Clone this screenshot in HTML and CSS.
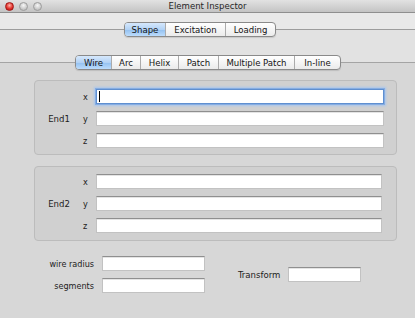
FILE: index.html
```html
<!DOCTYPE html>
<html lang="en">

<head>
  <meta charset="UTF-8">
  <meta name="viewport" content="width=device-width, initial-scale=1.0">
  <title>Element Inspector</title>
  <link rel="stylesheet" href="styles.css">
</head>

<body>
  <div class="window">
    <div class="titlebar">
      <div class="lights">
        <span class="light light--close"></span>
        <span class="light"></span>
        <span class="light"></span>
      </div>
      <div class="titlebar__title">Element Inspector</div>
      <div></div>
    </div>
    <div class="strip"></div>

    <div class="tabview tabview--outer">
      <div class="segmented segmented--outer">
        <span class="segmented__item segmented__item--active tab-shape">Shape</span>
        <span class="segmented__item tab-excitation">Excitation</span>
        <span class="segmented__item tab-loading">Loading</span>
      </div>

      <div class="tabview tabview--inner">
        <div class="segmented segmented--inner">
          <span class="segmented__item segmented__item--active tab-wire">Wire</span>
          <span class="segmented__item tab-arc">Arc</span>
          <span class="segmented__item tab-helix">Helix</span>
          <span class="segmented__item tab-patch">Patch</span>
          <span class="segmented__item tab-multiple">Multiple Patch</span>
          <span class="segmented__item tab-inline">In-line</span>
        </div>

        <div class="group group--first">
          <div class="group__name">End1</div>
          <div class="group__axis">x</div>
          <div class="field field--focus"><span class="caret"></span></div>
          <div class="group__axis">y</div>
          <div class="field"></div>
          <div class="group__axis">z</div>
          <div class="field"></div>
        </div>

        <div class="group">
          <div class="group__name">End2</div>
          <div class="group__axis">x</div>
          <div class="field"></div>
          <div class="group__axis">y</div>
          <div class="field"></div>
          <div class="group__axis">z</div>
          <div class="field"></div>
        </div>

        <div class="params">
          <div class="params__list">
            <div class="params__label">wire radius</div>
            <div class="field"></div>
            <div class="params__label">segments</div>
            <div class="field"></div>
          </div>
          <div class="params__transform">
            <div class="params__label">Transform</div>
            <div class="field field--short"></div>
          </div>
        </div>
      </div>
    </div>
  </div>
</body>

</html>
```

FILE: styles.css
```css
body {
  margin: 0;
  font-family: "DejaVu Sans Condensed", "Liberation Sans", Arial, sans-serif;
  font-size: 9.5px;
  color: #1c1c1c;
  background: #d7d7d7;
}

.window {
  width: 415px;
  height: 318px;
  overflow: hidden;
  display: flex;
  flex-direction: column;
  background: #d7d7d7;
}

/* title bar */
.titlebar {
  height: 12px;
  border-bottom: 1px solid #8f8f8f;
  background: linear-gradient(#e2e2e2, #c4c4c4);
  display: grid;
  grid-template-columns: 1fr auto 1fr;
  align-items: center;
}

.lights {
  display: flex;
  gap: 5px;
  padding-left: 5px;
}

.light {
  width: 9px;
  height: 9px;
  box-sizing: border-box;
  border-radius: 50%;
  border: 1px solid #9c9c9c;
  background: radial-gradient(circle at 50% 35%, #f6f6f6, #c4c4c4 70%);
}

.light--close {
  border-color: #a01818;
  background: radial-gradient(circle at 50% 35%, #ffb3aa, #e2342c 55%, #b31111);
}

.titlebar__title {
  line-height: 12px;
  color: #262626;
}

.strip {
  height: 16px;
  background: #e9e9e9;
}

/* tab views */
.tabview {
  flex: 1;
  display: flex;
  flex-direction: column;
}

.tabview--outer {
  border-top: 1px solid #9d9d9d;
  background: #e2e2e2;
}

.tabview--inner {
  margin-top: 25px;
  border-top: 1px solid #a4a4a4;
  background: #d7d7d7;
  padding: 0 18px 0 34px;
}

.segmented {
  align-self: flex-start;
  display: flex;
  height: 15px;
  box-sizing: border-box;
  margin-top: -8px;
  border: 1px solid #8a8a8a;
  border-radius: 4px;
  overflow: hidden;
  background: linear-gradient(#ffffff, #ebebeb);
  box-shadow: 0 1px 1px rgba(0, 0, 0, 0.12);
}

.segmented--outer {
  margin-left: 124px;
}

.segmented--inner {
  margin-left: 41px;
}

.segmented__item {
  box-sizing: border-box;
  text-align: center;
  line-height: 13px;
  color: #141414;
}

.segmented__item + .segmented__item {
  border-left: 1px solid #ababab;
}

.segmented__item--active {
  background: linear-gradient(#d6e8fc, #b2d2f5 50%, #92c0f0 51%, #bcdcfc);
}

.tab-shape { width: 40px; }
.tab-excitation { width: 60px; }
.tab-loading { width: 50px; }

.tab-wire { width: 35px; }
.tab-arc { width: 29px; }
.tab-helix { width: 38px; }
.tab-patch { width: 40px; }
.tab-multiple { width: 76px; }
.tab-inline { width: 46px; }

/* group boxes */
.group {
  margin-top: 11px;
  padding: 7px 14px 7px 0;
  border: 1px solid #bcbcbc;
  border-radius: 4px;
  background: #d0d0d0;
  display: grid;
  grid-template-columns: 48px 13px 1fr;
  grid-auto-rows: 15px;
  row-gap: 7px;
  align-items: center;
}

.group--first {
  margin-top: 10px;
  padding-top: 8px;
  padding-right: 12px;
  padding-bottom: 6px;
}

.group__name {
  grid-column: 1;
  grid-row: 1 / span 3;
  text-align: center;
}

.group__axis {
  grid-column: 2;
  font-size: 9px;
}

/* text fields */
.field {
  height: 15px;
  box-sizing: border-box;
  background: #ffffff;
  border: 1px solid #c2c2c2;
  border-top-color: #8f8f8f;
  box-shadow: inset 0 1px 0 #e4e4e4;
}

.field--focus {
  border-color: #5f8fd0;
  box-shadow: 0 0 0 1px #86ade2, 0 0 2px 2px #a9c6ee;
}

.caret {
  display: block;
  width: 1px;
  height: 11px;
  margin: 1px 0 0 2px;
  background: #000000;
}

.field--short {
  width: 73px;
}

/* bottom parameters */
.params {
  margin-top: 15px;
  display: flex;
  align-items: center;
}

.params__list {
  display: grid;
  grid-template-columns: 60px 103px;
  grid-auto-rows: 15px;
  column-gap: 8px;
  row-gap: 7px;
  align-items: center;
}

.params__label {
  text-align: right;
  font-size: 9px;
}

.params__transform {
  margin-left: 33px;
  display: flex;
  align-items: center;
  gap: 8px;
}

.params__transform .params__label {
  font-size: 9.5px;
}
```
